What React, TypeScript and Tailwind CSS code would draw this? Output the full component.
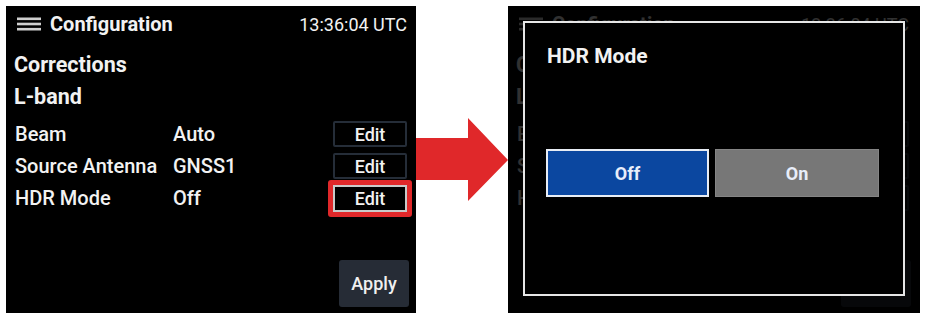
import React from "react";

const rows = [
  { label: "Beam", value: "Auto" },
  { label: "Source Antenna", value: "GNSS1" },
  { label: "HDR Mode", value: "Off" },
];

// dim = the copy behind the dialog; only the strip left of the dialog shows, so labels keep their first letter
function Screen({ highlight, dim }: { highlight: boolean; dim: boolean }) {
  return (
    <div className="flex flex-col h-full w-full bg-black text-[#f2f2f2]">
      <div className="flex items-center justify-between h-[36px] pl-[11px] pr-[9px]">
        <div className="flex items-center gap-[9px]">
          <svg width="24" height="14" viewBox="0 0 24 14">
            <rect x="0" y="0.5" width="24" height="2.6" fill="#cfcfcf" />
            <rect x="0" y="5.7" width="24" height="2.6" fill="#cfcfcf" />
            <rect x="0" y="10.9" width="24" height="2.6" fill="#cfcfcf" />
          </svg>
          <span className="text-[20px] font-bold">Configuration</span>
        </div>
        <span className="text-[18px]">13:36:04 UTC</span>
      </div>
      <div className="mt-[9px] h-[28px] flex items-center pl-[8px] text-[21.5px] font-bold">
        {dim ? "C" : "Corrections"}
      </div>
      <div className="mt-[4px] h-[28px] flex items-center pl-[8px] text-[21.5px] font-bold">
        {dim ? "L" : "L-band"}
      </div>
      <div className="mt-[7px] flex flex-col">
        {rows.map((row, index) => {
          const isLast = index === rows.length - 1;
          return (
            <div
              key={row.label}
              className="flex items-center h-[32px] pl-[9px] pr-[9px] text-[20px] font-medium"
            >
              <span className="w-[158px]">{dim ? row.label[0] : row.label}</span>
              <span className="flex-1">{dim ? "" : row.value}</span>
              <div
                className={
                  isLast && highlight
                    ? "rounded-[3px] border-[5px] border-[#e0282a] -m-[5px]"
                    : ""
                }
              >
                <button
                  className={
                    isLast && highlight
                      ? "w-[74px] h-[27px] flex items-center justify-center bg-black border-2 border-[#c9c9c9] text-[18px] font-medium"
                      : "w-[74px] h-[26px] flex items-center justify-center bg-black border-2 border-[#252d38] rounded-[2px] text-[18px] font-medium"
                  }
                >
                  {dim ? "" : "Edit"}
                </button>
              </div>
            </div>
          );
        })}
      </div>
      <div className="mt-auto flex justify-end pr-[7px] pb-[6px]">
        <button className="w-[70px] h-[47px] bg-[#262c36] rounded-[3px] text-[18px] font-medium text-[#f0f0f0]">
          {dim ? "" : "Apply"}
        </button>
      </div>
    </div>
  );
}

export default function App() {
  return (
    <div
      className="w-[927px] h-[320px] bg-white flex items-start pt-[6px]"
      style={{ fontFamily: "Roboto, 'Liberation Sans', sans-serif" }}
    >
      <div className="ml-[6px] w-[410px] h-[307px]">
        <Screen highlight={true} dim={false} />
      </div>
      <svg width="92" height="84" viewBox="0 0 92 84" className="self-center mt-[-7px] shrink-0">
        <polygon points="0,20 52,20 52,0 92,42 52,83 52,62 0,62" fill="#e0282a" />
      </svg>
      <div className="relative w-[412px] h-[307px] bg-black overflow-hidden">
        <div className="w-[410px] h-full opacity-20">
          <Screen highlight={false} dim={true} />
        </div>
        <div className="absolute left-[15px] top-[15px] right-[15px] bottom-[17px] bg-black border-2 border-[#e6e6e6] flex flex-col">
          <div className="pl-[22px] pt-[19px] text-[21px] font-bold text-[#f2f2f2] leading-[28px]">
            HDR Mode
          </div>
          <div className="mt-[79px] ml-[21px] flex gap-[6px]">
            <button className="w-[163px] h-[48px] bg-[#0b47a0] border-2 border-[#e8edf5] text-[18px] font-bold text-[#e8eefa]">
              Off
            </button>
            <button className="w-[164px] h-[48px] bg-[#777777] border border-[#858585] text-[18px] font-bold text-[#e8eefa]">
              On
            </button>
          </div>
        </div>
      </div>
    </div>
  );
}
